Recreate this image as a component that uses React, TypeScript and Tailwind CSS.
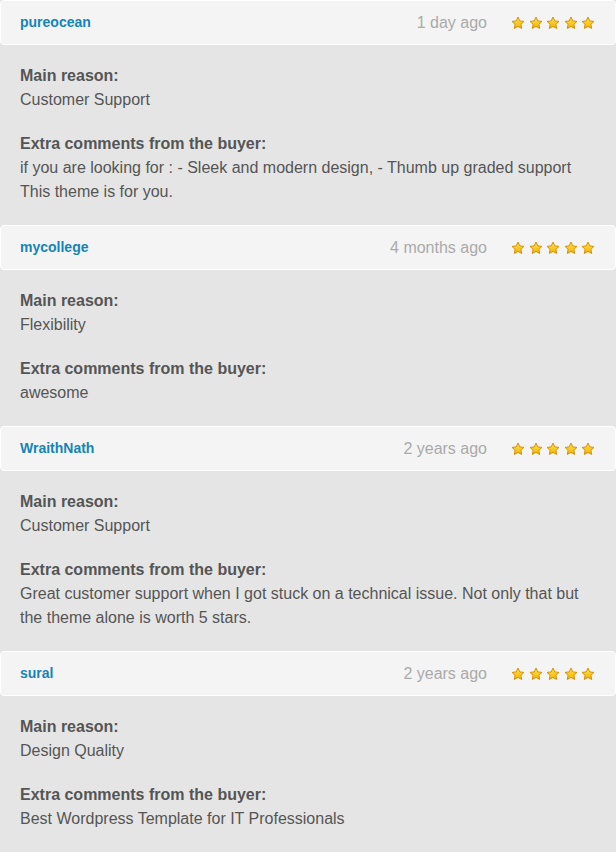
import React from 'react';

type Review = {
  user: string;
  when: string;
  reason: string;
  comment: string[];
};

const reviews: Review[] = [
  {
    user: 'pureocean',
    when: '1 day ago',
    reason: 'Customer Support',
    comment: ['if you are looking for : - Sleek and modern design, - Thumb up graded support', 'This theme is for you.'],
  },
  { user: 'mycollege', when: '4 months ago', reason: 'Flexibility', comment: ['awesome'] },
  {
    user: 'WraithNath',
    when: '2 years ago',
    reason: 'Customer Support',
    comment: ['Great customer support when I got stuck on a technical issue. Not only that but', 'the theme alone is worth 5 stars.'],
  },
  { user: 'sural', when: '2 years ago', reason: 'Design Quality', comment: ['Best Wordpress Template for IT Professionals'] },
];

const Star: React.FC = () => (
  <svg width="14" height="14" viewBox="0 0 24 24" className="block">
    <defs>
      <linearGradient id="starFill" x1="0" y1="0" x2="0" y2="1">
        <stop offset="0%" stopColor="#ffe24a" />
        <stop offset="100%" stopColor="#f5b400" />
      </linearGradient>
    </defs>
    <path
      d="M12 1.8l3.1 6.6 7.1.9-5.2 4.9 1.3 7.1L12 17.8l-6.3 3.5 1.3-7.1-5.2-4.9 7.1-.9z"
      fill="url(#starFill)"
      stroke="#d18a00"
      strokeWidth="1.6"
      strokeLinejoin="round"
    />
  </svg>
);

const ReviewItem: React.FC<{ review: Review }> = ({ review }) => (
  <div>
    <div className="flex h-[45px] items-center justify-between rounded-[4px] border border-white bg-[#f4f4f4] pl-[19px] pr-[20px]">
      <span className="text-[14px] font-bold text-[#1584b8]">{review.user}</span>
      <div className="flex items-center">
        <span className="mr-[24px] text-[16px] text-[#aaaaaa]">{review.when}</span>
        <div className="flex gap-[3.5px]">
          {[0, 1, 2, 3, 4].map((i) => (
            <Star key={i} />
          ))}
        </div>
      </div>
    </div>
    <div className="px-[20px] pt-[19px] pb-[21px] text-[16px] leading-[24px] text-[#555555]">
      <p className="font-bold">Main reason:</p>
      <p>{review.reason}</p>
      <p className="mt-[20px] font-bold">Extra comments from the buyer:</p>
      {review.comment.map((line, i) => (
        <p key={i}>{line}</p>
      ))}
    </div>
  </div>
);

export default function App() {
  return (
    <div className="min-h-[852px] w-[616px] bg-[#e5e5e5]" style={{ fontFamily: '"Liberation Sans", Arial, sans-serif' }}>
      {reviews.map((r) => (
        <ReviewItem key={r.user} review={r} />
      ))}
    </div>
  );
}
